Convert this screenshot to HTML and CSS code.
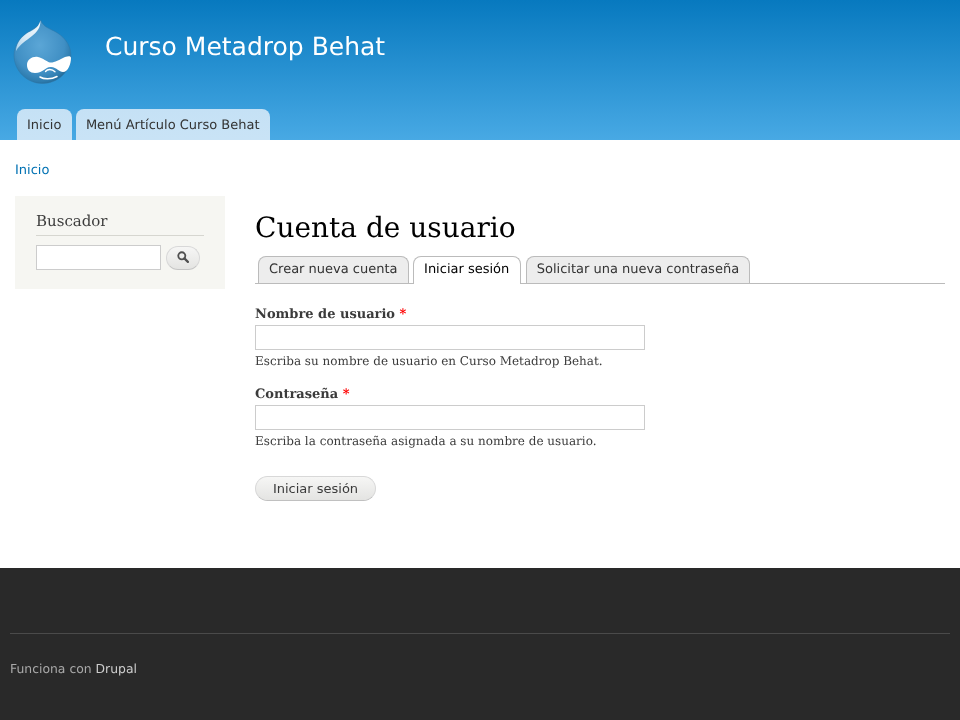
FILE: index.html
```html
<!DOCTYPE html>
<html lang="es">
<head>
<meta charset="utf-8">
<title>Cuenta de usuario | Curso Metadrop Behat</title>
<link rel="stylesheet" href="styles.css">
</head>
<body>
<header class="site-header">
  <div class="brand">
    <svg class="logo" width="60" height="68" viewBox="0 0 60 68" aria-hidden="true">
      <defs>
        <radialGradient id="dropFill" cx="45%" cy="40%" r="62%">
          <stop offset="0" stop-color="#5ba6d6"/>
          <stop offset="0.7" stop-color="#408fc4"/>
          <stop offset="0.92" stop-color="#2d7bad"/>
          <stop offset="1" stop-color="#246a97"/>
        </radialGradient>
        <linearGradient id="shine" x1="1" y1="0" x2="0" y2="1">
          <stop offset="0" stop-color="#f2f8fc"/>
          <stop offset="0.6" stop-color="#d8eaf6"/>
          <stop offset="1" stop-color="#a9d0ea"/>
        </linearGradient>
      </defs>
      <path d="M27.7 2C27 8 22 9.5 17 13 8 18 1 27 1 37 1 53 14 65.5 29.5 65.5 45 65.5 58 53 58 38 58 25 49 17 41 13 35 10 29.5 8 27.7 2Z" fill="url(#dropFill)" stroke="#2f76a6" stroke-width="0.5"/>
      <path d="M27.5 2.5C25 11 19 12 13 16 7 20 3 27 3 33 7 26 13 23 19 18 24 14 27.5 10 27.5 2.5Z" fill="url(#shine)"/>
      <path d="M14 47C14 41 20 38 25 39 30 40 34 44 37 44.5 41 45 46 42 52 39 55 38 58 37.5 58 40 58 46 55 54 50 54 46 54 44 49.5 38 49 32 48.5 31 55 22 55 17 55 14 52 14 47Z" fill="#fff"/>
      <path d="M32.5 53.5C34.5 50.8 39 50.8 42 53.8" fill="none" stroke="#fff" stroke-width="1.3" stroke-linecap="round"/>
      <path d="M27 59C31 61.5 38 61.5 44 58.5" fill="none" stroke="#fff" stroke-width="1.5" stroke-linecap="round"/>
    </svg>
    <a class="site-name" href="#">Curso Metadrop Behat</a>
  </div>
  <nav class="main-menu">
    <a class="menu-tab" href="#">Inicio</a>
    <a class="menu-tab" href="#">Menú Artículo Curso Behat</a>
  </nav>
</header>

<div class="page">
  <a class="breadcrumb" href="#">Inicio</a>
  <div class="columns">
    <aside class="sidebar">
      <h2 class="block-title">Buscador</h2>
      <form class="search">
        <input class="search-input" type="text" aria-label="Buscar">
        <button class="search-btn" type="button" aria-label="Buscar">
          <svg width="12" height="12" viewBox="0 0 13 13" aria-hidden="true">
            <circle cx="5.2" cy="5.2" r="3.8" fill="none" stroke="#505050" stroke-width="2"/>
            <path d="M8 8L11.8 11.8" stroke="#505050" stroke-width="2.4" stroke-linecap="round"/>
          </svg>
        </button>
      </form>
    </aside>
    <main class="content">
      <h1 class="title">Cuenta de usuario</h1>
      <ul class="tabs">
        <li><a class="tab" href="#">Crear nueva cuenta</a></li>
        <li><a class="tab active" href="#">Iniciar sesión</a></li>
        <li><a class="tab" href="#">Solicitar una nueva contraseña</a></li>
      </ul>
      <form class="login">
        <div class="field">
          <label class="label">Nombre de usuario <span class="req">*</span></label>
          <input class="text-input" type="text">
          <div class="help">Escriba su nombre de usuario en Curso Metadrop Behat.</div>
        </div>
        <div class="field">
          <label class="label">Contraseña <span class="req">*</span></label>
          <input class="text-input" type="password">
          <div class="help">Escriba la contraseña asignada a su nombre de usuario.</div>
        </div>
        <button class="submit" type="button">Iniciar sesión</button>
      </form>
    </main>
  </div>
</div>

<footer class="site-footer">
  <div class="footer-inner">Funciona con <a class="footer-link" href="#">Drupal</a></div>
</footer>
</body>
</html>
```

FILE: styles.css
```css
* { box-sizing: border-box; }
html, body { margin: 0; padding: 0; }
body {
  width: 960px;
  height: 720px;
  overflow: hidden;
  display: flex;
  flex-direction: column;
  background: #fff;
  color: #3b3b3b;
  font-family: "DejaVu Serif", serif;
  font-size: 14px;
  text-rendering: geometricPrecision;
  will-change: opacity;
}
a { text-decoration: none; }

.site-header {
  height: 140px;
  background: linear-gradient(to bottom, #0779bf 0%, #48a9e4 100%);
  display: flex;
  flex-direction: column;
  justify-content: space-between;
}
.brand {
  display: flex;
  align-items: flex-start;
  padding: 18px 0 0 13px;
}
.logo { display: block; flex: none; }
.site-name {
  margin: 13px 0 0 32px;
  font: 25px/32px "DejaVu Sans", sans-serif;
  color: #fff;
}
.main-menu {
  display: flex;
  gap: 4px;
  padding-left: 17px;
}
.menu-tab {
  height: 31px;
  padding: 1px 10.5px 0 10px;
  border-radius: 8px 8px 0 0;
  background: linear-gradient(to bottom, #c5e1f5, #c9e3f6);
  color: #333;
  font: 13px/31px "DejaVu Sans", sans-serif;
}

.page {
  flex: 1;
  padding: 21px 15px 0;
}
.breadcrumb {
  display: block;
  height: 35px;
  color: #0071b3;
  font: 13px/20px "DejaVu Sans", sans-serif;
}
.columns {
  display: flex;
  gap: 30px;
  align-items: flex-start;
}
.sidebar {
  flex: none;
  width: 210px;
  height: 93px;
  padding: 14px 21px 0;
  background: #f6f6f2;
}
.block-title {
  margin: 0 0 9px;
  height: 26px;
  border-bottom: 1px solid #d6d6d0;
  font: 400 15px/23px "DejaVu Serif", serif;
  color: #3b3b3b;
}
.search { display: flex; gap: 5px; align-items: flex-start; }
.search-input {
  width: 125px;
  height: 25px;
  border: 1px solid #ccc;
  background: #fff;
  padding: 0;
}
.search-btn {
  width: 34px;
  height: 24px;
  margin-top: 1px;
  padding: 0 0 2px;
  border: 1px solid #d8d8d8;
  border-bottom-color: #c4c4c4;
  border-radius: 12px;
  background: linear-gradient(to bottom, #f6f6f5, #e4e4e2);
  display: flex;
  align-items: center;
  justify-content: center;
}

.content { flex: 1; min-width: 0; }
.title {
  margin: 12px 0 0;
  height: 48px;
  font: 400 28px/40px "DejaVu Serif", serif;
  color: #000;
}
.tabs {
  list-style: none;
  margin: 0;
  padding: 0 0 0 3px;
  height: 28px;
  display: flex;
  gap: 5px;
  border-bottom: 1px solid #bbb;
}
.tab {
  display: block;
  height: 27px;
  padding: 1px 10px 0;
  border: 1px solid #bbb;
  border-bottom: 0;
  border-radius: 8px 8px 0 0;
  background: #ededed;
  color: #333;
  font: 13px/24px "DejaVu Sans", sans-serif;
}
.tab.active {
  height: 28px;
  margin-left: -0.5px;
  padding-right: 10.5px;
  background: #fff;
  color: #000;
}

.login { padding-top: 20px; }
.field { margin-bottom: 11px; }
.label {
  display: block;
  height: 21px;
  padding-top: 1px;
  font: 700 13px/19px "DejaVu Serif", serif;
  color: #3b3b3b;
}
.req { color: #f00; }
.text-input {
  display: block;
  width: 390px;
  height: 25px;
  border: 1px solid #ccc;
  background: #fff;
  padding: 0;
}
.help {
  font: 12px/23px "DejaVu Serif", serif;
  color: #3b3b3b;
}
.submit {
  display: block;
  margin-top: 23px;
  width: 121px;
  height: 25px;
  padding: 0;
  border: 1px solid #d8d8d8;
  border-bottom-color: #c0c0c0;
  border-radius: 13px;
  background: linear-gradient(to bottom, #f6f6f5, #e4e4e2);
  color: #3a3a3a;
  font: 13px/23px "DejaVu Sans", sans-serif;
}

.site-footer {
  height: 152px;
  background: #292929;
  padding: 65px 10px 0;
}
.footer-inner {
  border-top: 1px solid #4a4a4a;
  padding-top: 26px;
  color: #a8a8a8;
  font: 12.4px/17px "DejaVu Sans", sans-serif;
}
.footer-link { color: #ccc; }
```
